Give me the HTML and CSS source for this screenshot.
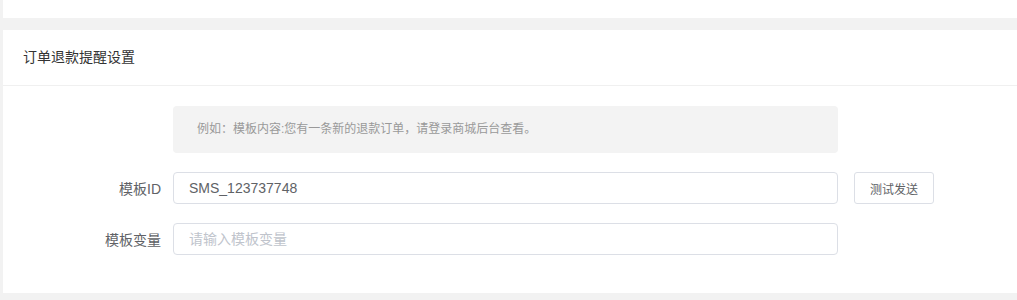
FILE: index.html
```html
<!DOCTYPE html>
<html lang="zh-CN">
<head>
    <meta charset="UTF-8">
    <title>订单退款提醒设置</title>
    <link rel="stylesheet" href="styles.css">
</head>
<body>
    <div class="page">
        <!-- previous card (cut off at top) -->
        <div class="card card-top"></div>

        <div class="card">
            <div class="card-header">订单退款提醒设置</div>
            <div class="card-body">
                <div class="tip">例如：模板内容:您有一条新的退款订单，请登录商城后台查看。</div>

                <div class="form-item">
                    <label class="form-label">模板ID</label>
                    <div class="form-content">
                        <input class="input" type="text" value="SMS_123737748">
                        <button class="btn">测试发送</button>
                    </div>
                </div>

                <div class="form-item">
                    <label class="form-label">模板变量</label>
                    <div class="form-content">
                        <input class="input" type="text" placeholder="请输入模板变量">
                    </div>
                </div>
            </div>
        </div>
    </div>
</body>
</html>
```

FILE: styles.css
```css
body {
    margin: 0;
    padding: 0;
    background-color: #f2f2f2;
    font-family: "Liberation Sans", "Noto Sans CJK SC", sans-serif;
    color: #333;
}

.page {
    padding-left: 3px;
}

.card {
    background-color: #fff;
    margin-bottom: 12px;
}

.card-top {
    height: 18px;
}

.card-header {
    height: 55px;
    line-height: 55px;
    padding: 0 20px;
    font-size: 14px;
    color: #333;
    border-bottom: 1px solid #f0f0f0;
}

.card-body {
    padding: 20px 20px 38px;
}

.tip {
    margin-left: 150px;
    width: 665px;
    height: 47px;
    line-height: 47px;
    padding-left: 24px;
    box-sizing: border-box;
    background-color: #f3f3f3;
    border-radius: 4px;
    font-size: 12px;
    color: #999;
}

.form-item {
    display: flex;
    align-items: center;
    margin-top: 19px;
}

.form-item:first-of-type {
    margin-top: 21px;
}

.form-label {
    width: 150px;
    padding-right: 12px;
    box-sizing: border-box;
    text-align: right;
    font-size: 14px;
    color: #606266;
}

.form-content {
    display: flex;
    align-items: center;
}

.input {
    width: 665px;
    height: 32px;
    box-sizing: border-box;
    padding: 0 15px;
    border: 1px solid #dcdfe6;
    border-radius: 4px;
    font-family: inherit;
    font-size: 14px;
    color: #606266;
    outline: none;
}

.input::placeholder {
    color: #c0c4cc;
}

.btn {
    margin-left: 16px;
    width: 80px;
    height: 32px;
    background-color: #fff;
    border: 1px solid #dcdfe6;
    border-radius: 3px;
    font-family: inherit;
    font-size: 12px;
    color: #606266;
    cursor: pointer;
}
```
